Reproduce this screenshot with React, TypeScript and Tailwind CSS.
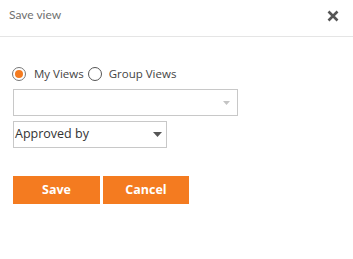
import React from "react";

export default function App() {
  return (
    <div className="w-[353px] h-[259px] bg-white" style={{ fontFamily: "'Open Sans', 'Liberation Sans', sans-serif" }}>
      <div className="h-[37px] border-b border-[#e5e5e5] flex items-start justify-between">
        <div className="pl-[9px] pt-[6px] text-[12px] text-[#707070]" style={{ fontFamily: "Lato, 'Open Sans', sans-serif" }}>Save view</div>
        <div className="pr-[14px] pt-[10px]">
          <svg width="12" height="12" viewBox="0 0 12 12">
            <path d="M1.5 1.5 L10.5 10.5 M10.5 1.5 L1.5 10.5" stroke="#555" strokeWidth="2.6" strokeLinecap="butt" />
          </svg>
        </div>
      </div>
      <div className="pl-[12px] pt-[29px]">
        <div className="flex items-center h-[16px] text-[11.5px] text-[#444]">
          <span className="w-[14px] h-[14px] rounded-full border border-[#777] flex items-center justify-center">
            <span className="w-[8px] h-[8px] rounded-full bg-[#f47b20]" />
          </span>
          <span className="ml-[8px]">My Views</span>
          <span className="ml-[4px] w-[14px] h-[14px] rounded-full border border-[#555]" />
          <span className="ml-[7px]">Group Views</span>
        </div>
        <div className="mt-[7px] ml-[1px] w-[225px] h-[27px] border border-[#c8c8c8] flex items-center justify-end pr-[7px]">
          <svg width="7" height="4" viewBox="0 0 7 4"><path d="M0 0 L7 0 L3.5 4 Z" fill="#c4c4c4" /></svg>
        </div>
        <div className="mt-[5px] ml-[1px] w-[154px] h-[27px] border border-[#c8c8c8] flex items-center justify-between pl-[1px] pr-[4px] text-[12.5px] text-[#333]">
          <span>Approved by</span>
          <svg width="9" height="5" viewBox="0 0 9 5"><path d="M0 0 L9 0 L4.5 5 Z" fill="#555" /></svg>
        </div>
        <div className="mt-[28px] ml-[1px] flex gap-[3px]">
          <button className="w-[87px] h-[28px] bg-[#f47b20] text-white text-[12.5px] font-bold">Save</button>
          <button className="w-[86px] h-[28px] bg-[#f47b20] text-white text-[12.5px] font-bold">Cancel</button>
        </div>
      </div>
    </div>
  );
}
